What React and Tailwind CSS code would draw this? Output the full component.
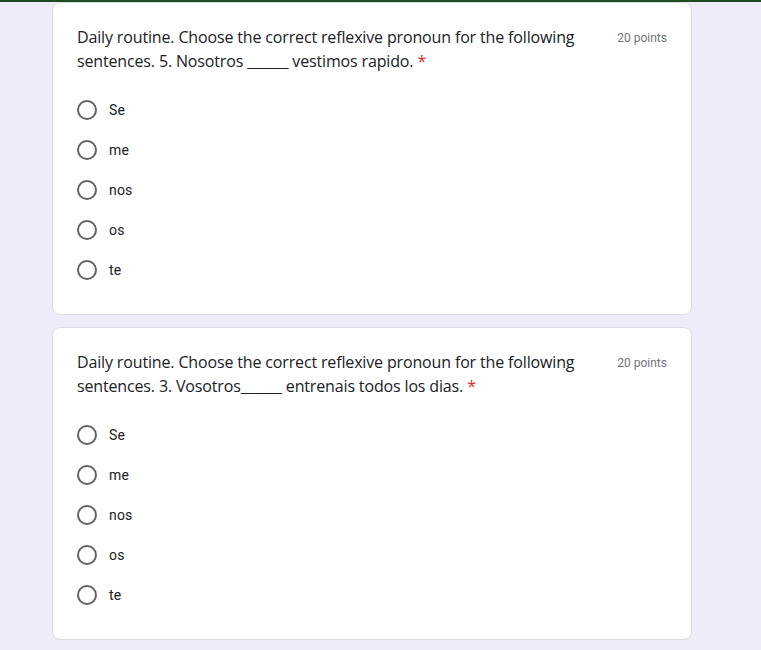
import React from "react";

const questions = [
  {
    title: "Daily routine. Choose the correct reflexive pronoun for the following sentences. 5. Nosotros ______ vestimos rapido.",
    points: "20 points",
    options: ["Se", "me", "nos", "os", "te"],
  },
  {
    title: "Daily routine. Choose the correct reflexive pronoun for the following sentences. 3. Vosotros______ entrenais todos los dias.",
    points: "20 points",
    options: ["Se", "me", "nos", "os", "te"],
  },
];

function Question({ q }) {
  return (
    <div className="bg-white border border-[#dadce0] rounded-lg px-6 pt-6 pb-6">
      <div className="flex items-start">
        <div className="flex-1 pr-8 -mt-[2px] text-[16px] leading-6 text-[#202124] font-['Open_Sans',sans-serif] tracking-[-0.15px]">
          {q.title}
          <span className="ml-1 text-[#d93025]">*</span>
        </div>
        <div className="shrink-0 pt-[3px] text-[12px] leading-4 text-[#70757a] font-['Roboto',sans-serif]">
          {q.points}
        </div>
      </div>
      <div className="mt-[17px] flex flex-col">
        {q.options.map((o) => (
          <label key={o} className="flex items-center h-10 cursor-pointer">
            <span className="w-5 h-5 rounded-full border-2 border-[#5f6368] shrink-0" />
            <span className="ml-3 text-[14px] text-[#202124] font-['Roboto',sans-serif] tracking-[0.2px]">
              {o}
            </span>
          </label>
        ))}
      </div>
    </div>
  );
}

export default function App() {
  return (
    <div className="min-h-[650px] w-full bg-[#f0ebf8] border-t-2 border-[#1f4a22]">
      <div className="w-[640px] ml-[52px] flex flex-col gap-3 pb-6">
        {questions.map((q, i) => (
          <Question key={i} q={q} />
        ))}
      </div>
    </div>
  );
}
